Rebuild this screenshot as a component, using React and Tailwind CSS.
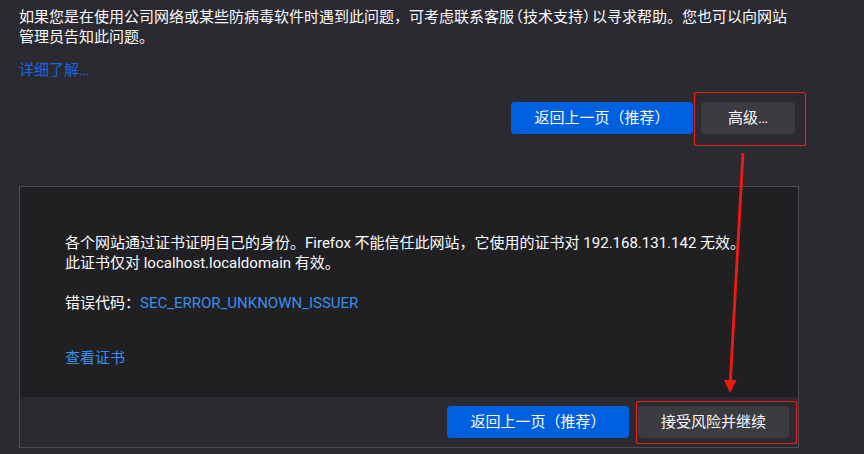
import React from 'react';

const FONT = { fontFamily: 'Roboto, "Noto Sans CJK SC", sans-serif' };

const Button = ({ primary, className = '', children }) => (
  <button
    className={`h-8 rounded-[4px] text-[15px] text-[#fbfbfe] flex items-center justify-center ${
      primary ? 'bg-[#0061e0]' : 'bg-[#3c3b41]'
    } ${className}`}
  >
    {children}
  </button>
);

// red annotation drawn over the screenshot
const Annotation = () => (
  <svg className="absolute inset-0 pointer-events-none" width="864" height="454" viewBox="0 0 864 454">
    <rect x="694.5" y="92.5" width="111" height="53" rx="2" fill="none" stroke="#e8201a" strokeWidth="1.2" />
    <rect x="636.5" y="401.5" width="160" height="42" rx="2" fill="none" stroke="#e8201a" strokeWidth="1.2" />
    <line x1="743" y1="153" x2="730.3" y2="382" stroke="#f01a12" strokeWidth="2.8" />
    <polygon points="724,380 736.5,380 730,393" fill="#f01a12" />
  </svg>
);

export default function App() {
  return (
    <div className="relative w-[864px] h-[454px] overflow-hidden bg-[#2b2a31] text-[15px] leading-[20px] text-[#fbfbfe]" style={FONT}>
      <div className="w-[780px] ml-[19px] pt-[7px]">
        <p className="whitespace-nowrap">
          如果您是在使用公司网络或某些防病毒软件时遇到此问题，可考虑联系客服<span className="ml-[1.5px] [font-feature-settings:'halt']">（</span>技术支持<span className="mr-[1.5px] [font-feature-settings:'halt']">）</span>以寻求帮助。您也可以向网站
          <br />
          管理员告知此问题。
        </p>
        <p className="mt-[13px] text-[#1b63e0]">详细了解…</p>

        <div className="flex justify-end gap-2 mt-[22px] pr-[4px]">
          <Button primary className="w-[182px]">返回上一页（推荐）</Button>
          <Button className="w-[94px]">高级…</Button>
        </div>

        {/* 高级面板 */}
        <div className="mt-[52px] border border-[#4c4b52] bg-[#202023]">
          <div className="pl-[45px] pt-[46px] pb-[29px]">
            <p className="whitespace-nowrap">
              各个网站通过证书证明自己的身份。Firefox 不能信任此网站，它使用的证书对 192.168.131.142 无效。
              <br />
              此证书仅对 localhost.localdomain 有效。
            </p>
            <p className="mt-[20px]">
              错误代码：<span className="text-[#3a8eea]">SEC_ERROR_UNKNOWN_ISSUER</span>
            </p>
            <p className="mt-[35px] text-[#3a8eea]">查看证书</p>
          </div>
          <div className="bg-[#2b2a31] h-[50px] flex items-center justify-end gap-[9px] pr-[9px]">
            <Button primary className="w-[182px]">返回上一页（推荐）</Button>
            <Button className="w-[151px]">接受风险并继续</Button>
          </div>
        </div>
      </div>
      <Annotation />
    </div>
  );
}
